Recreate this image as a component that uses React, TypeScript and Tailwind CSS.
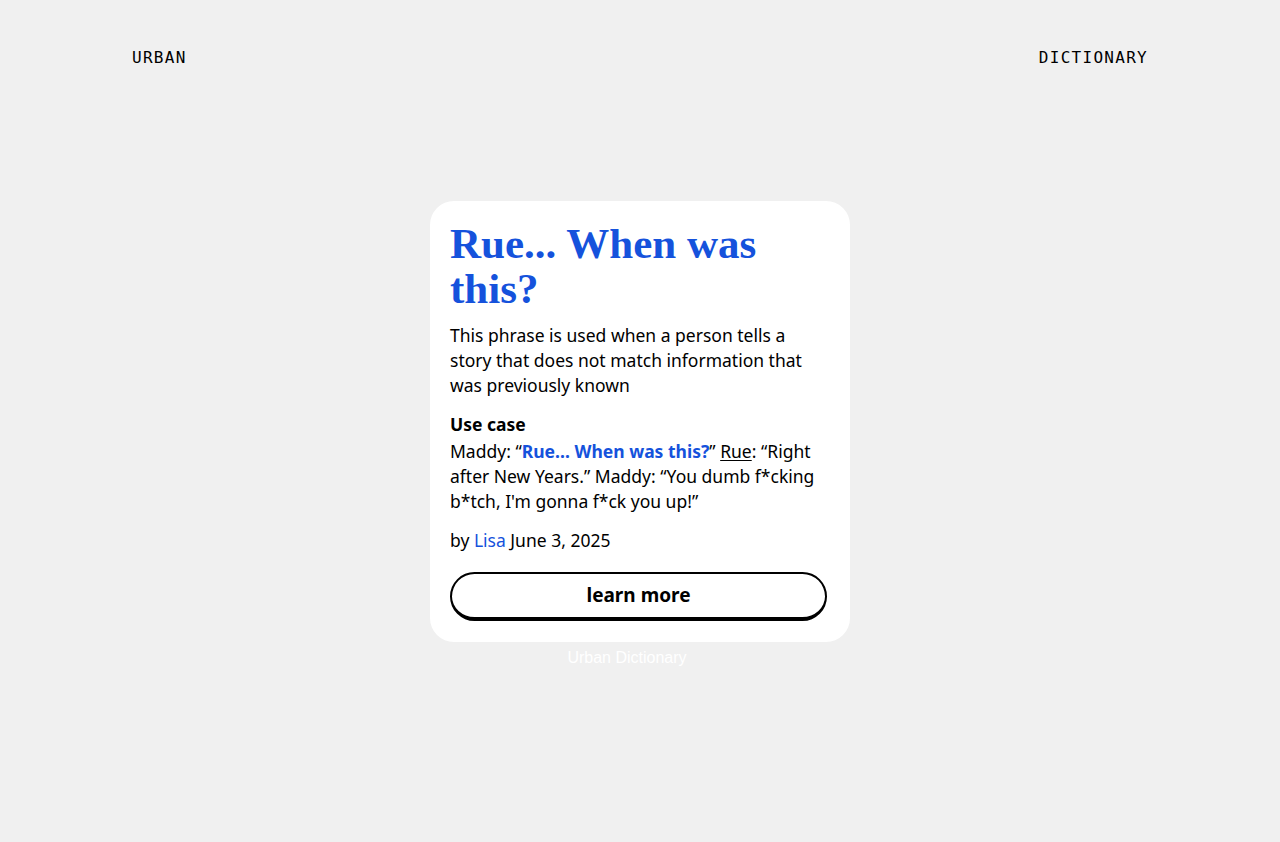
export default function App() {
  const sans = { fontFamily: '"Noto Sans", "Open Sans", sans-serif' };
  return (
    <div className="min-h-[842px] bg-[#f0f0f0] flex flex-col">
      {/* Header */}
      <div
        className="flex justify-between px-[132px] pt-[46px] text-[16px] tracking-[0.08em] text-black"
        style={{ fontFamily: '"DejaVu Sans Mono", monospace' }}
      >
        <span>URBAN</span>
        <span>DICTIONARY</span>
      </div>

      {/* Card */}
      <div className="flex flex-col items-center mt-[131px]">
        <div className="w-[420px] bg-white rounded-[24px] px-5 pt-[20px] pb-[21px] text-black" style={sans}>
          <h1
            className="text-[43px] leading-[45px] font-bold text-[#1552dc]"
            style={{ fontFamily: '"Liberation Serif", serif' }}
          >
            Rue... When was this?
          </h1>
          <p className="mt-[12px] text-[17.5px] leading-[25px]">
            This phrase is used when a person tells a story that does not match information that was previously known
          </p>
          <p className="mt-[14px] text-[17.5px] leading-[25px] font-bold">Use case</p>
          <p className="mt-[2px] text-[17.5px] leading-[25px]">
            Maddy: “<span className="font-bold text-[#1552dc]">Rue… When was this?</span>”{' '}
            <span className="underline underline-offset-2">Rue</span>: “Right after New Years.” Maddy: “You dumb f*cking
            b*tch, I'm gonna f*ck you up!”
          </p>
          <p className="mt-[14px] text-[17.5px] leading-[25px]">
            by <span className="text-[#1552dc]">Lisa</span> June 3, 2025
          </p>
          <button className="mt-[19px] w-[377px] h-[49px] rounded-full border-2 border-black border-b-[4px] text-[19px] font-bold flex items-center justify-center">
            learn more
          </button>
        </div>
        <p className="mt-[4px] mr-[26px] text-[16px] text-white" style={{ fontFamily: '"Liberation Sans", sans-serif' }}>
          Urban Dictionary
        </p>
      </div>
    </div>
  );
}
